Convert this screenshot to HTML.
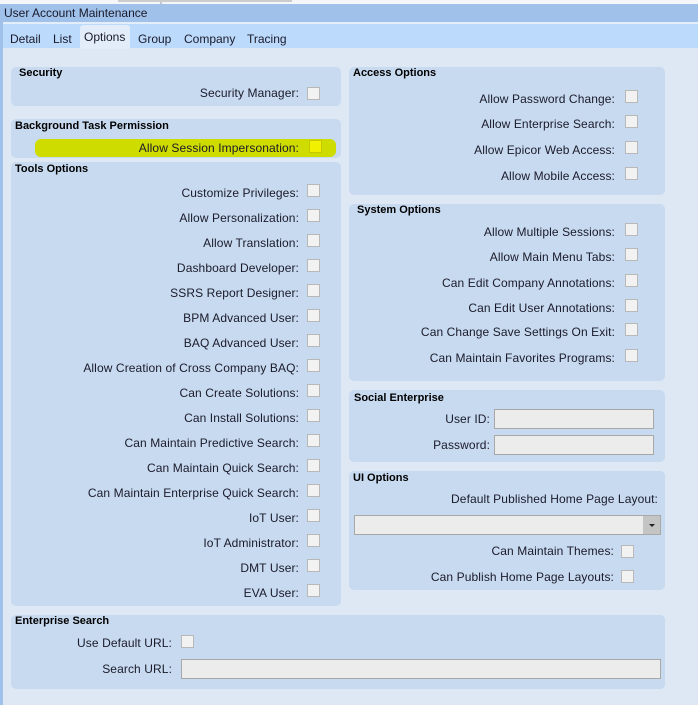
<!DOCTYPE html>
<html><head><meta charset="utf-8"><style>
*{margin:0;padding:0;box-sizing:border-box}
body{width:698px;height:705px;overflow:hidden;background:#dee8f5;font-family:"Liberation Sans",Arial,sans-serif;font-size:12px;color:#1a1a2a;position:relative}
.a{position:absolute}
.p{position:absolute;background:#c8daf0;border-radius:5px}
.t{position:absolute;font-weight:bold;font-size:11px;color:#000}
.l{position:absolute;text-align:right;white-space:nowrap;line-height:14px;letter-spacing:0.1px}
.c{position:absolute;width:13px;height:13px;background:#f2f2f2;border:1px solid #b8b8b8}
.i{position:absolute;background:#ececec;border:1px solid #a8a8a8}
</style></head><body>
<div class="a" style="left:0;top:0;width:698px;height:4px;background:#f4f6fa"></div>
<div class="a" style="left:160px;top:0;width:2px;height:4px;background:#c0c8d4"></div>
<div class="a" style="left:118px;top:0;width:174px;height:2px;background:#ccc"></div>
<div class="a" style="left:0;top:4px;width:698px;height:18px;background:#9fc1ea"></div>
<div class="a" style="left:4px;top:5px;line-height:16px">User Account Maintenance</div>
<div class="a" style="left:0;top:22px;width:698px;height:2px;background:#e4eefb"></div>
<div class="a" style="left:0;top:24px;width:698px;height:24px;background:#bcdafc"></div>
<div class="a" style="left:0;top:22px;width:3px;height:683px;background:#9fc1ea"></div>
<div class="a" style="left:80px;top:25px;width:50px;height:24px;background:#e3edf9;border-radius:3px 3px 0 0"></div>
<div class="a" style="left:10px;top:32px">Detail</div>
<div class="a" style="left:53px;top:32px">List</div>
<div class="a" style="left:84px;top:30px">Options</div>
<div class="a" style="left:138px;top:32px">Group</div>
<div class="a" style="left:184px;top:32px">Company</div>
<div class="a" style="left:247px;top:32px">Tracing</div>

<div class="p" style="left:11px;top:67px;width:330px;height:39px"></div>
<div class="t" style="left:19px;top:67px">Security</div>
<div class="p" style="left:11px;top:119px;width:330px;height:39px"></div>
<div class="t" style="left:15px;top:120px">Background Task Permission</div>
<div class="a" style="left:35px;top:139px;width:301px;height:18px;background:#cfdc00;border-radius:6px"></div>
<div class="p" style="left:11px;top:162px;width:330px;height:444px"></div>
<div class="t" style="left:15px;top:163px">Tools Options</div>
<div class="p" style="left:349px;top:67px;width:316px;height:128px"></div>
<div class="t" style="left:353px;top:67px">Access Options</div>
<div class="p" style="left:349px;top:204px;width:316px;height:177px"></div>
<div class="t" style="left:357px;top:204px">System Options</div>
<div class="p" style="left:349px;top:390px;width:316px;height:72px"></div>
<div class="t" style="left:354px;top:392px">Social Enterprise</div>
<div class="p" style="left:349px;top:471px;width:316px;height:119px"></div>
<div class="t" style="left:353px;top:472px">UI Options</div>
<div class="p" style="left:11px;top:615px;width:654px;height:74px"></div>
<div class="t" style="left:15px;top:615px">Enterprise Search</div>

<div class="l" style="right:399px;top:86px">Security Manager:</div><div class="c" style="left:307px;top:87px"></div>
<div class="l" style="right:399px;top:141px">Allow Session Impersonation:</div><div class="c" style="left:309px;top:140px;background:#f0f000;border-color:#c8c800"></div>

<div class="l" style="right:208px;top:412px">User ID:</div><div class="i" style="left:494px;top:409px;width:160px;height:20px"></div>
<div class="l" style="right:208px;top:438px">Password:</div><div class="i" style="left:494px;top:435px;width:160px;height:20px"></div>
<div class="l" style="right:40px;top:492px">Default Published Home Page Layout:</div>
<div class="i" style="left:354px;top:515px;width:307px;height:20px"></div>
<div class="a" style="left:643px;top:516px;width:17px;height:18px;background:#c4c4c4"></div>
<div class="a" style="left:649px;top:524px;width:0;height:0;border-left:3px solid transparent;border-right:3px solid transparent;border-top:3px solid #222"></div>
<div class="l" style="right:84px;top:544px">Can Maintain Themes:</div><div class="c" style="left:621px;top:545px"></div>
<div class="l" style="right:84px;top:570px">Can Publish Home Page Layouts:</div><div class="c" style="left:621px;top:570px"></div>
<div class="l" style="right:526px;top:636px">Use Default URL:</div><div class="c" style="left:181px;top:635px"></div>
<div class="l" style="right:526px;top:662px">Search URL:</div><div class="i" style="left:181px;top:659px;width:480px;height:20px"></div>

<div class="l" style="right:399px;top:186px">Customize Privileges:</div><div class="c" style="left:307px;top:184px"></div>
<div class="l" style="right:399px;top:211px">Allow Personalization:</div><div class="c" style="left:307px;top:209px"></div>
<div class="l" style="right:399px;top:236px">Allow Translation:</div><div class="c" style="left:307px;top:234px"></div>
<div class="l" style="right:399px;top:261px">Dashboard Developer:</div><div class="c" style="left:307px;top:259px"></div>
<div class="l" style="right:399px;top:286px">SSRS Report Designer:</div><div class="c" style="left:307px;top:284px"></div>
<div class="l" style="right:399px;top:311px">BPM Advanced User:</div><div class="c" style="left:307px;top:309px"></div>
<div class="l" style="right:399px;top:336px">BAQ Advanced User:</div><div class="c" style="left:307px;top:334px"></div>
<div class="l" style="right:399px;top:361px">Allow Creation of Cross Company BAQ:</div><div class="c" style="left:307px;top:359px"></div>
<div class="l" style="right:399px;top:386px">Can Create Solutions:</div><div class="c" style="left:307px;top:384px"></div>
<div class="l" style="right:399px;top:411px">Can Install Solutions:</div><div class="c" style="left:307px;top:409px"></div>
<div class="l" style="right:399px;top:436px">Can Maintain Predictive Search:</div><div class="c" style="left:307px;top:434px"></div>
<div class="l" style="right:399px;top:461px">Can Maintain Quick Search:</div><div class="c" style="left:307px;top:459px"></div>
<div class="l" style="right:399px;top:486px">Can Maintain Enterprise Quick Search:</div><div class="c" style="left:307px;top:484px"></div>
<div class="l" style="right:399px;top:511px">IoT User:</div><div class="c" style="left:307px;top:509px"></div>
<div class="l" style="right:399px;top:536px">IoT Administrator:</div><div class="c" style="left:307px;top:534px"></div>
<div class="l" style="right:399px;top:561px">DMT User:</div><div class="c" style="left:307px;top:559px"></div>
<div class="l" style="right:399px;top:586px">EVA User:</div><div class="c" style="left:307px;top:584px"></div>

<div class="l" style="right:83px;top:92px">Allow Password Change:</div><div class="c" style="left:625px;top:90px"></div>
<div class="l" style="right:83px;top:117px">Allow Enterprise Search:</div><div class="c" style="left:625px;top:115px"></div>
<div class="l" style="right:83px;top:143px">Allow Epicor Web Access:</div><div class="c" style="left:625px;top:141px"></div>
<div class="l" style="right:83px;top:169px">Allow Mobile Access:</div><div class="c" style="left:625px;top:167px"></div>
<div class="l" style="right:83px;top:225px">Allow Multiple Sessions:</div><div class="c" style="left:625px;top:223px"></div>
<div class="l" style="right:83px;top:250px">Allow Main Menu Tabs:</div><div class="c" style="left:625px;top:248px"></div>
<div class="l" style="right:83px;top:276px">Can Edit Company Annotations:</div><div class="c" style="left:625px;top:274px"></div>
<div class="l" style="right:83px;top:301px">Can Edit User Annotations:</div><div class="c" style="left:625px;top:299px"></div>
<div class="l" style="right:83px;top:325px">Can Change Save Settings On Exit:</div><div class="c" style="left:625px;top:323px"></div>
<div class="l" style="right:83px;top:351px">Can Maintain Favorites Programs:</div><div class="c" style="left:625px;top:349px"></div>
</body></html>
